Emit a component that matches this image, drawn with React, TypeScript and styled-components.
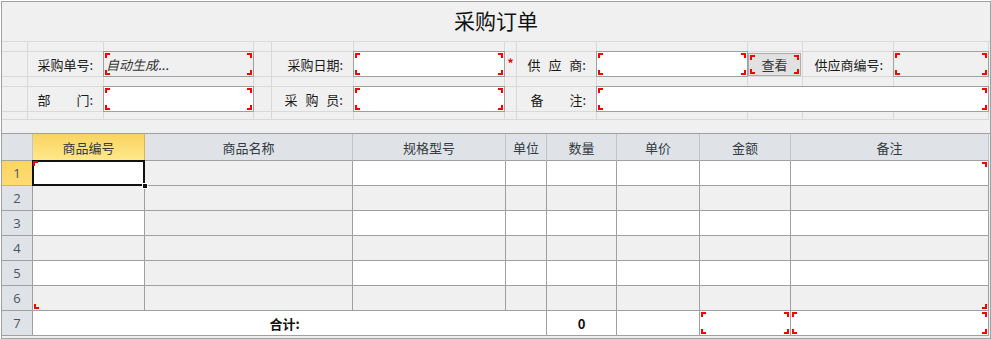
import React from "react";
import styled, { createGlobalStyle, css } from "styled-components";

const GlobalStyle = createGlobalStyle`
  html, body {
    margin: 0;
    padding: 0;
    background: #ffffff;
  }
  body {
    font-family: "Noto Sans CJK SC", "Noto Sans", sans-serif;
    font-size: 13px;
    color: #222222;
  }
`;

type CornerPos = "tl" | "tr" | "bl" | "br";

const cornerCss = {
  tl: css<{ $inset: number }>`
    top: ${({ $inset }) => $inset}px;
    left: ${({ $inset }) => $inset}px;
    border-top-width: 2px;
    border-left-width: 2px;
  `,
  tr: css<{ $inset: number }>`
    top: ${({ $inset }) => $inset}px;
    right: ${({ $inset }) => $inset}px;
    border-top-width: 2px;
    border-right-width: 2px;
  `,
  bl: css<{ $inset: number }>`
    bottom: ${({ $inset }) => $inset}px;
    left: ${({ $inset }) => $inset}px;
    border-bottom-width: 2px;
    border-left-width: 2px;
  `,
  br: css<{ $inset: number }>`
    bottom: ${({ $inset }) => $inset}px;
    right: ${({ $inset }) => $inset}px;
    border-bottom-width: 2px;
    border-right-width: 2px;
  `,
};

const Corner = styled.i<{ $pos: CornerPos; $inset: number }>`
  position: absolute;
  box-sizing: border-box;
  width: 5px;
  height: 5px;
  border: 0 solid #ff0000;
  z-index: 2;
  ${({ $pos }) => cornerCss[$pos]}
`;

const Brackets: React.FC<{ only?: CornerPos[]; inset?: number }> = ({
  only = ["tl", "tr", "bl", "br"],
  inset = 1,
}) => (
  <>
    {only.map((p) => (
      <Corner key={p} $pos={p} $inset={inset} />
    ))}
  </>
);

const Frame = styled.div`
  box-sizing: border-box;
  margin: 1px 0 0 1px;
  width: 990px;
  height: 338px;
  border: 1px solid #a0a0a0;
  background: #f0f0f0;
  display: flex;
  flex-direction: column;
`;

const Title = styled.h1`
  box-sizing: border-box;
  margin: 0;
  height: 39px;
  padding-bottom: 4px;
  display: flex;
  align-items: center;
  justify-content: center;
  font-size: 21px;
  font-weight: normal;
  color: #111111;
`;

/* ---------- form ---------- */

const FormGrid = styled.div`
  display: grid;
  grid-template-columns: 26px 76px 150px 18px 82px 151px 12px 80px 151px 55px 91px 95px;
  grid-template-rows: 10px 25px 10px 25px 8px;
  border-top: 1px solid #d9d9d9;
`;

const FormCell = styled.div<{ $span?: number; $justify?: string }>`
  box-sizing: border-box;
  min-width: 0;
  grid-column: span ${({ $span }) => $span ?? 1};
  border-right: 1px solid #d9d9d9;
  border-bottom: 1px solid #d9d9d9;
  display: flex;
  align-items: center;
  justify-content: ${({ $justify }) => $justify ?? "flex-start"};
`;

const Label = styled.span`
  padding-right: 10px;
  white-space: pre;
  word-spacing: 5px;
  font-size: 13px;
  color: #1a1a1a;
`;

const Field = styled.div<{ $readonly?: boolean }>`
  position: relative;
  flex: 1;
  align-self: stretch;
  margin: -1px;
  border: 1px solid #a0a0a0;
  background: ${({ $readonly }) => ($readonly ? "#f0f0f0" : "#ffffff")};
  display: flex;
  align-items: center;
  padding: 0 2px;
  font-size: 13px;
  font-style: italic;
  color: #333333;
`;

const Star = styled.span`
  color: #e00000;
  font-size: 12px;
  font-weight: bold;
  margin-top: -4px;
`;

const ViewButton = styled.button`
  position: relative;
  box-sizing: border-box;
  align-self: flex-start;
  width: 53px;
  height: 23px;
  margin: 1px 0 0 0;
  padding: 0;
  border: 1px solid #adadad;
  background: #e1e1e1;
  font-family: "Noto Sans CJK SC", sans-serif;
  font-size: 13px;
  color: #333333;
`;

type FormItem =
  | { kind: "blank"; span?: number }
  | { kind: "label"; text: string }
  | { kind: "field"; span?: number; readonly?: boolean; text?: string }
  | { kind: "star" }
  | { kind: "button"; text: string };

const spacer: FormItem[] = Array.from({ length: 12 }, () => ({ kind: "blank" }));

const formRows: FormItem[][] = [
  spacer,
  [
    { kind: "blank" },
    { kind: "label", text: "采购单号:" },
    { kind: "field", readonly: true, text: "自动生成..." },
    { kind: "blank" },
    { kind: "label", text: "采购日期:" },
    { kind: "field" },
    { kind: "star" },
    { kind: "label", text: "供 应 商:" },
    { kind: "field" },
    { kind: "button", text: "查看" },
    { kind: "label", text: "供应商编号:" },
    { kind: "field", readonly: true },
  ],
  spacer,
  [
    { kind: "blank" },
    { kind: "label", text: "部\u3000\u3000门:" },
    { kind: "field" },
    { kind: "blank" },
    { kind: "label", text: "采 购 员:" },
    { kind: "field" },
    { kind: "blank" },
    { kind: "label", text: "备\u3000\u3000注:" },
    { kind: "field", span: 4 },
  ],
  spacer,
];

const renderFormItem = (item: FormItem, key: string) => {
  switch (item.kind) {
    case "label":
      return (
        <FormCell key={key} $justify="flex-end">
          <Label>{item.text}</Label>
        </FormCell>
      );
    case "field":
      return (
        <FormCell key={key} $span={item.span}>
          <Field $readonly={item.readonly}>
            {item.text}
            <Brackets />
          </Field>
        </FormCell>
      );
    case "star":
      return (
        <FormCell key={key} $justify="center">
          <Star>*</Star>
        </FormCell>
      );
    case "button":
      return (
        <FormCell key={key}>
          <ViewButton>
            {item.text}
            <Brackets />
          </ViewButton>
        </FormCell>
      );
    default:
      return <FormCell key={key} $span={item.span} />;
  }
};

/* ---------- sheet ---------- */

type Tone = "head" | "headActive" | "num" | "numActive" | "white" | "gray";

const toneCss: Record<Tone, ReturnType<typeof css>> = {
  head: css`
    background: #dfe3e8;
    border-right-color: #c2c6cb;
    color: #333a40;
  `,
  headActive: css`
    background: linear-gradient(#f9d35f, #ffe88c);
    border-right-color: #e2b24a;
    border-bottom-color: #e2b24a;
    color: #333a40;
  `,
  num: css`
    background: #dfe3e8;
    color: #4a5562;
    font-family: "Open Sans", "Noto Sans", sans-serif;
  `,
  numActive: css`
    background: linear-gradient(#fcd466, #ffdb70);
    border-bottom-color: #e2b24a;
    color: #4a5562;
    font-family: "Open Sans", "Noto Sans", sans-serif;
  `,
  white: css`
    background: #ffffff;
  `,
  gray: css`
    background: #f0f0f0;
  `,
};

const Sheet = styled.div`
  margin-top: 13px;
  display: grid;
  grid-template-columns: 31px 112px 208px 153px 41px 70px 83px 91px 198px;
  grid-template-rows: 27px repeat(7, 25px);
  border-top: 1px solid #a0a0a0;
`;

const SheetCell = styled.div<{
  $tone: Tone;
  $span?: number;
  $bold?: boolean;
  $selected?: boolean;
  $shift?: number;
}>`
  position: relative;
  box-sizing: border-box;
  min-width: 0;
  grid-column: span ${({ $span }) => $span ?? 1};
  border-right: 1px solid #a0a0a0;
  border-bottom: 1px solid #a0a0a0;
  display: flex;
  align-items: center;
  justify-content: center;
  padding-right: ${({ $shift }) => $shift ?? 0}px;
  font-size: 13px;
  font-weight: ${({ $bold }) => ($bold ? "bold" : "normal")};
  color: #111111;
  z-index: ${({ $selected }) => ($selected ? 1 : "auto")};
  ${({ $tone }) => toneCss[$tone]}
`;

const Selection = styled.span`
  position: absolute;
  top: -1px;
  left: -1px;
  right: -1px;
  bottom: -1px;
  border: 2px solid #111111;
`;

const FillHandle = styled.span`
  position: absolute;
  right: -4px;
  bottom: -4px;
  width: 4px;
  height: 4px;
  background: #111111;
  border: 1px solid #ffffff;
`;

const columns = ["商品编号", "商品名称", "规格型号", "单位", "数量", "单价", "金额", "备注"];

const rangeMarks: Record<string, CornerPos> = {
  "1-0": "tl",
  "1-7": "tr",
  "6-0": "bl",
  "6-7": "br",
};

export default function App() {
  return (
    <>
      <GlobalStyle />
      <Frame>
        <Title>采购订单</Title>

        <FormGrid>
          {formRows.map((row, r) => row.map((item, c) => renderFormItem(item, `${r}-${c}`)))}
        </FormGrid>

        <Sheet>
          <SheetCell $tone="head" />
          {columns.map((name, c) => (
            <SheetCell key={name} $tone={c === 0 ? "headActive" : "head"}>
              {name}
            </SheetCell>
          ))}

          {[1, 2, 3, 4, 5, 6].map((row) => (
            <React.Fragment key={row}>
              <SheetCell $tone={row === 1 ? "numActive" : "num"}>{row}</SheetCell>
              {columns.map((name, c) => {
                const tone: Tone = row % 2 === 1 && c !== 1 ? "white" : "gray";
                const mark = rangeMarks[`${row}-${c}`];
                const selected = row === 1 && c === 0;
                return (
                  <SheetCell key={name} $tone={tone} $selected={selected}>
                    {mark && <Brackets only={[mark]} inset={mark === "tl" ? 0 : 1} />}
                    {selected && (
                      <>
                        <Selection />
                        <FillHandle />
                      </>
                    )}
                  </SheetCell>
                );
              })}
            </React.Fragment>
          ))}

          <SheetCell $tone="num">7</SheetCell>
          <SheetCell $tone="white" $span={4} $bold $shift={10}>
            合计:
          </SheetCell>
          <SheetCell $tone="white" $bold>
            0
          </SheetCell>
          <SheetCell $tone="white" />
          <SheetCell $tone="white">
            <Brackets />
          </SheetCell>
          <SheetCell $tone="white">
            <Brackets />
          </SheetCell>
        </Sheet>
      </Frame>
    </>
  );
}
